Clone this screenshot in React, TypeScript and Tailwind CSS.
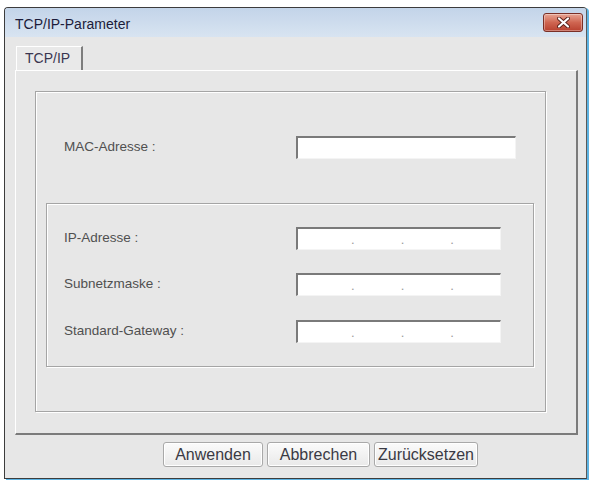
import type { ReactNode } from 'react'

const font = { fontFamily: '"Liberation Sans", Arial, sans-serif' }

function Edit({ ip = false, width }: { ip?: boolean; width: string }) {
  return (
    <div
      className={`h-[23px] ${width} border-t-2 border-l-2 border-r border-b border-t-[#7a7a7a] border-l-[#7a7a7a] border-r-[#f4f4f4] border-b-[#f4f4f4] bg-white`}
    >
      {ip && (
        <div className="flex h-full items-end gap-[46px] pb-[1px] pl-[53px] text-[13px] leading-[16px] text-[#9a9a9a]">
          <span>.</span>
          <span>.</span>
          <span>.</span>
        </div>
      )}
    </div>
  )
}

function Row({ label, children, className = '' }: { label: string; children: ReactNode; className?: string }) {
  return (
    <div className={`flex items-center ${className}`}>
      <span className="w-[232px] text-[13.5px] text-[#505050]">{label}</span>
      {children}
    </div>
  )
}

function Btn({ children, width }: { children: ReactNode; width: string }) {
  return (
    <button
      type="button"
      className={`h-[25px] ${width} rounded-[3px] border border-[#a9a9a9] bg-gradient-to-b from-[#fbfbfb] to-[#e9e9e9] text-[16px] leading-none text-[#3a3a44] shadow-[inset_0_0_0_1px_#ffffff]`}
    >
      {children}
    </button>
  )
}

export default function App() {
  return (
    <div className="h-[484px] w-[593px] bg-white pl-[4px] pt-[7px]" style={font}>
      <div className="flex h-[472px] w-[583px] flex-col rounded-t-[4px] border border-[#3c3c3c] border-r-[#5a5a5a] bg-[#e7e7e7] shadow-[2px_1px_0_#5db3e2]">
        {/* title bar */}
        <div className="flex h-[29px] items-start justify-between rounded-t-[3px] bg-gradient-to-b from-[#c3d4e9] to-[#d8e4f1] pl-[10px] pr-[3px]">
          <span className="mt-[8px] text-[14px] leading-[16px] text-[#1c1c3a]">TCP/IP-Parameter</span>
          <div className="mt-[5px] flex h-[19px] w-[40px] items-center justify-center rounded-[3px] border border-[#7a2f26] bg-gradient-to-b from-[#e7a493] via-[#cf6551] to-[#b8402f] shadow-[inset_0_0_0_1px_rgba(255,255,255,0.35)]">
            <svg width="13" height="11" viewBox="0 0 13 11">
              <path d="M2 1.5 L11 9.5 M11 1.5 L2 9.5" stroke="#5a2019" strokeWidth="4" strokeLinecap="round" />
              <path d="M2 1.5 L11 9.5 M11 1.5 L2 9.5" stroke="#ffffff" strokeWidth="2.2" strokeLinecap="round" />
            </svg>
          </div>
        </div>

        {/* tab header */}
        <div className="ml-[11px] mt-[9px] flex h-[24px] w-[67px] items-center border-l border-t border-r-2 border-l-white border-t-white border-r-[#7d7d7d] bg-[#e9e9e9] pl-[8px] text-[14px] text-[#3a3650]">
          TCP/IP
        </div>

        {/* tab page */}
        <div className="ml-[10px] h-[365px] w-[563px] border-l border-t border-r-2 border-b-2 border-l-white border-t-white border-r-[#7b7b7b] border-b-[#7b7b7b] pl-[19px] pt-[20px]">
          <div className="h-[321px] w-[511px] border border-[#a5a5a5] pl-[28px] pt-[44px] shadow-[inset_1px_1px_0_#ffffff,1px_1px_0_#ffffff]">
            <Row label="MAC-Adresse :">
              <Edit width="w-[220px]" />
            </Row>
            <div className="-ml-[18px] mt-[44px] h-[164px] w-[488px] border border-[#a5a5a5] pl-[17px] pt-[23px] shadow-[inset_1px_1px_0_#ffffff,1px_1px_0_#ffffff]">
              <Row label="IP-Adresse :">
                <Edit ip width="w-[205px]" />
              </Row>
              <Row label="Subnetzmaske :" className="mt-[23px]">
                <Edit ip width="w-[205px]" />
              </Row>
              <Row label="Standard-Gateway :" className="mt-[24px]">
                <Edit ip width="w-[205px]" />
              </Row>
            </div>
          </div>
        </div>

        {/* buttons */}
        <div className="mt-[7px] flex gap-[4px] pl-[158px]">
          <Btn width="w-[100px]">Anwenden</Btn>
          <Btn width="w-[103px]">Abbrechen</Btn>
          <Btn width="w-[104px]">Zurücksetzen</Btn>
        </div>
      </div>
    </div>
  )
}
